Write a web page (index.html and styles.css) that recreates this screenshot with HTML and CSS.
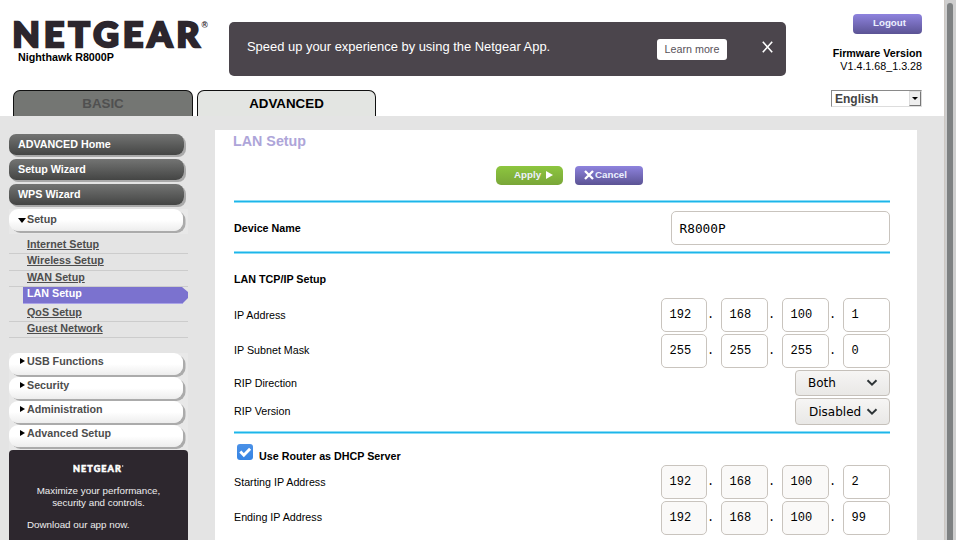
FILE: index.html
```
<!DOCTYPE html>
<html lang="en">
<head>
<meta charset="utf-8">
<title>NETGEAR Router R8000P</title>
<link rel="stylesheet" href="styles.css">
</head>
<body>
<div class="window">
  <div class="page">
    <header class="header">
      <div class="top">
        <div class="brand">
          <svg class="logo" width="200" height="32" viewBox="0 0 200 32">
            <text class="logo-text" x="1.500" y="29" textLength="191" lengthAdjust="spacingAndGlyphs">NETGEAR</text>
            <text class="logo-reg" x="190.500" y="10">®</text>
          </svg>
          <div class="model">Nighthawk R8000P</div>
        </div>
        <div class="banner">
          <span class="banner-text">Speed up your experience by using the Netgear App.</span>
          <button class="learn">Learn more</button>
          <svg class="close" width="11" height="12" viewBox="0 0 11 12"><path d="M.8.8l9.400 10.400M10.200.8L.8 11.200" stroke="#fff" stroke-width="1.600"/></svg>
        </div>
        <div class="account">
          <button class="btn purple logout">Logout</button>
          <b>Firmware Version</b>
          <span>V1.4.1.68_1.3.28</span>
        </div>
      </div>
      <div class="bottom">
        <nav class="tabs">
          <a class="tab basic">BASIC</a>
          <a class="tab advanced">ADVANCED</a>
        </nav>
        <div class="language"><span>English</span><i class="drop"></i></div>
      </div>
    </header>
    <div class="body">
      <aside class="sidebar">
        <a class="dark">ADVANCED Home</a>
        <a class="dark">Setup Wizard</a>
        <a class="dark">WPS Wizard</a>
        <div class="light-row open"><a class="light"><i class="down"></i>Setup</a></div>
        <ul class="submenu">
          <li class="first"><a>Internet Setup</a></li>
          <li><a>Wireless Setup</a></li>
          <li class="short"><a>WAN Setup</a></li>
          <li class="active"><a>LAN Setup</a></li>
          <li class="after"><a>QoS Setup</a></li>
          <li class="short"><a>Guest Network</a></li>
        </ul>
        <div class="light-row"><a class="light"><i class="right"></i>USB Functions</a></div>
        <div class="light-row"><a class="light"><i class="right"></i>Security</a></div>
        <div class="light-row"><a class="light"><i class="right"></i>Administration</a></div>
        <div class="light-row last"><a class="light"><i class="right"></i>Advanced Setup</a></div>
        <div class="promo">
          <svg class="promo-logo" width="51" height="9" viewBox="0 0 51 9"><text x="0" y="7.500" textLength="49" lengthAdjust="spacingAndGlyphs">NETGEAR</text><circle cx="49.700" cy="2" r=".7"/></svg>
          <p>Maximize your performance,<br>security and controls.</p>
          <p class="download">Download our app now.</p>
        </div>
      </aside>
      <main class="main">
        <h1>LAN Setup</h1>
        <div class="actions">
          <button class="btn green">Apply<svg width="7" height="8" viewBox="0 0 7 8"><path d="M0 0l7 4-7 4z" fill="#fff"/></svg></button>
          <button class="btn purple cancel"><svg width="10" height="10" viewBox="0 0 10 10"><path d="M1 1l8 8M9 1L1 9" stroke="#fff" stroke-width="2.3"/></svg>Cancel</button>
        </div>
        <hr>
        <div class="row device"><b>Device Name</b><div class="field name">R8000P</div></div>
        <hr>
        <h2>LAN TCP/IP Setup</h2>
        <div class="row ip"><span>IP Address</span><div class="octets"><div class="field">192</div><i>.</i><div class="field">168</div><i>.</i><div class="field">100</div><i>.</i><div class="field">1</div></div></div>
        <div class="row ip lower"><span>IP Subnet Mask</span><div class="octets"><div class="field">255</div><i>.</i><div class="field">255</div><i>.</i><div class="field">255</div><i>.</i><div class="field">0</div></div></div>
        <div class="row choice"><span>RIP Direction</span><div class="select"><span>Both</span><svg width="12" height="8" viewBox="0 0 12 8"><path d="M1.500 1.200L6 5.600l4.500-4.400" fill="none" stroke="#2e3436" stroke-width="2"/></svg></div></div>
        <div class="row choice second"><span>RIP Version</span><div class="select"><span>Disabled</span><svg width="12" height="8" viewBox="0 0 12 8"><path d="M1.500 1.200L6 5.600l4.500-4.400" fill="none" stroke="#2e3436" stroke-width="2"/></svg></div></div>
        <hr>
        <div class="dhcp"><span class="check"><svg width="16" height="16" viewBox="0 0 16 16"><path d="M3.300 7.600l3.500 3.600 6.300-6.500" fill="none" stroke="#fff" stroke-width="2.900"/></svg></span><b>Use Router as DHCP Server</b></div>
        <div class="row ip fixed"><span>Starting IP Address</span><div class="octets"><div class="field">192</div><i>.</i><div class="field">168</div><i>.</i><div class="field">100</div><i>.</i><div class="field">2</div></div></div>
        <div class="row ip fixed lower"><span>Ending IP Address</span><div class="octets"><div class="field">192</div><i>.</i><div class="field">168</div><i>.</i><div class="field">100</div><i>.</i><div class="field">99</div></div></div>
      </main>
    </div>
  </div>
  <div class="scrollbar"><div class="thumb"></div></div>
</div>
</body>
</html>
```
FILE: styles.css
```
* { box-sizing: border-box; }
body { margin: 0; font: 10.72px/13px "Liberation Sans", Arial, sans-serif; color: #000; overflow: hidden; }
button { font-family: inherit; border: 0; padding: 0; }
i { font-style: normal; }

.window { display: flex; width: 956px; height: 540px; overflow: hidden; }
.page { width: 944px; background: #e4e4e4; }
.scrollbar { width: 12px; padding: 3px 3px 0 2px; background: #cecece; border-left: 1px solid #cdc7c2; }
.thumb { width: 6px; height: 537px; background: #7e8182; border-radius: 3px 3px 0 0; }

.header { height: 116px; background: #fff; }
.top { display: flex; height: 90px; }
.brand { width: 229px; padding: 18px 0 0 11px; }
.logo { display: block; overflow: visible; }
.logo-text { font: 900 33.5px Lato, sans-serif; letter-spacing: 4px; fill: #2c262d; stroke: #2c262d; stroke-width: 2.4px; }
.logo-reg { font: bold 8.5px "Liberation Sans", sans-serif; fill: #2c262d; }
.model { font-weight: bold; margin: 1px 0 0 7px; }
.banner { display: flex; width: 557px; height: 54px; margin-top: 22px; padding: 17px 13px 0 18px; background: #4b454c; border-radius: 5px; color: #fff; }
.banner-text { width: 410px; font-size: 12.93px; line-height: 15px; }
.learn { width: 70px; height: 21px; padding-bottom: 1px; border-radius: 3px; background: #fff; color: #58525a; font-size: 10.72px; }
.close { margin: 2px 0 0 35px; }
.account { width: 136px; display: flex; flex-direction: column; align-items: flex-end; padding-top: 14px; }
.account b { margin-top: 13px; }
.btn { display: flex; height: 19px; border-radius: 4px; font-size: 9.75px; font-weight: bold; line-height: 17px; color: #ecf0ff; }
.purple { background: linear-gradient(#8e83de, #5b5394); }
.green { background: linear-gradient(#8dc63f, #79a638); }
.logout { width: 69px; height: 20px; line-height: 18px; padding-left: 20px; }

.bottom { display: flex; justify-content: space-between; height: 26px; padding: 0 22px 0 13px; }
.tabs { display: flex; gap: 4px; }
.tab { height: 26px; border: 1px solid #111; border-bottom: 0; border-radius: 7px 7px 0 0; font-size: 13.33px; font-weight: bold; line-height: 26px; text-align: center; }
.basic { width: 180px; background: #747673; color: #505050; }
.advanced { width: 179px; background: #e3e5e2; }
.language { display: flex; justify-content: space-between; width: 91px; height: 17px; border: 1px solid #8a8a8a; border-right-color: #ddd; border-bottom-color: #ddd; padding-left: 3px; font-size: 12px; font-weight: bold; line-height: 17px; color: #444; }
.drop { display: flex; align-items: center; justify-content: center; width: 12px; height: 15px; background: #eee; border: 1px solid #ddd; border-right-color: #777; border-bottom-color: #777; }
.drop::after { content: ""; border: 3.5px solid transparent; border-width: 3px 3.5px 0; border-top-color: #000; }

.body { display: flex; height: 424px; }
.sidebar { width: 188px; padding: 18px 0 0 9px; font-weight: bold; color: #4d4d4d; }
.dark { display: block; width: 175px; height: 21px; margin-bottom: 4px; padding-left: 9px; border-radius: 7px 8px 8px 7px; background: linear-gradient(#737473, #444544); box-shadow: 2px 2px 0 #a9a9a9; line-height: 20px; color: #fff; }
.light-row { width: 179px; height: 24px; background: #e8e8e8; }
.open { height: 25px; }
.last { height: 25px; }
.light { display: flex; width: 174px; height: 22px; border-radius: 9px; background: linear-gradient(#fff 50%, #ededed); box-shadow: 2.5px 2px 0 #ababab; line-height: 17px; }
.light i { width: 18px; padding: 5px 0 0 11px; }
.open .light { line-height: 20px; }
.open .light i { padding: 9px 0 0 9px; }
.right::after, .down::after { content: ""; display: block; width: 0; border: 3.5px solid transparent; }
.right::after { border-left: 5px solid #000; border-right: 0; }
.down::after { border-width: 5px 4px 0; border-top-color: #000; }
.submenu { list-style: none; margin: 0; padding: 3px 0 0; height: 119px; }
.submenu li { height: 17px; padding-left: 18px; border-bottom: 1px solid #ccc; line-height: 12px; text-decoration: underline; }
.submenu .first { line-height: 14px; }
.submenu .short { height: 16px; }
.submenu .active { height: 17px; margin: 0 0 1px 14px; padding-left: 4px; border: 0; border-bottom: 1px solid #aaa3e8; background: #7b72cf; clip-path: polygon(0 0, 159px 0, 100% 5px, 100% 11px, 159px 100%, 0 100%); color: #fff; text-decoration: none; }
.submenu .after { height: 17px; padding-top: 1px; }
.promo { width: 179px; height: 100px; padding-top: 14px; border-radius: 4px 4px 0 0; background: #2d272e; color: #eee; font-size: 9.8px; font-weight: normal; line-height: 12px; text-align: center; }
.promo-logo { display: block; margin: 0 auto; fill: #fff; }
.promo-logo text { font: 900 8.5px Lato, sans-serif; letter-spacing: 1px; stroke: #fff; stroke-width: .5px; }
.promo p { margin: 12px 0 0; }
.promo .download { margin-top: 10px; padding-left: 18px; text-align: left; }

.main { width: 702px; height: 410px; margin: 14px 0 0 27px; padding: 0 27px 0 19px; background: #fff; overflow: hidden; }
h1 { margin: 0 0 0 -1px; height: 36px; font-size: 14.3px; line-height: 23px; color: #aea5d9; }
.actions { display: flex; gap: 12px; height: 34px; padding-left: 262px; }
.green { width: 67px; padding-left: 18px; border-radius: 5px; }
.green svg { margin: 5px 0 0 5px; }
.cancel { width: 68px; padding-left: 9px; }
.cancel svg { margin: 4px 1px 0 0; }
hr { height: 3px; margin: 0; border: 1px solid #8bdcf5; border-width: 1px 0; background: #1db5ea; }
.row { display: flex; justify-content: space-between; }
.device { height: 48px; padding-top: 8px; line-height: 34px; }
.field { height: 34px; border: 1px solid #c9c4be; border-radius: 5px; background: #fff; padding-left: 7.5px; font: 12px/33px "Liberation Mono", monospace; }
.device .name { width: 219px; font: 12.8px/34px "DejaVu Sans Mono", monospace; }
h2 { margin: 0; height: 44px; padding-top: 19px; font-size: 10.72px; line-height: 13px; }
.ip { height: 36px; line-height: 34px; }
.lower > span { line-height: 32px; }
.octets { display: grid; grid-template-columns: 46px 14px 47px 14px 47px 14px 47px; font-family: "Liberation Mono", monospace; font-size: 12px; }
.octets i { line-height: 34px; }
.fixed .field:not(:last-child) { background: #faf9f8; }
.choice { height: 28px; line-height: 26px; }
.second { height: 33px; }
.select { display: flex; justify-content: space-between; align-items: center; width: 95px; height: 26px; padding: 0 11px 0 12px; border: 1px solid #c5c0ba; border-radius: 4px; background: linear-gradient(#f6f5f4, #e9e8e6); font: 12px/26px "DejaVu Sans", sans-serif; }
.second .select { height: 27px; padding-left: 13px; }
.dhcp { display: flex; height: 31px; padding: 10px 0 0 3px; }
.check { width: 16px; height: 16px; margin-right: 6px; border-radius: 3px; background: linear-gradient(#4b91e7, #3584e4); }
.dhcp b { padding-top: 6px; }
```
